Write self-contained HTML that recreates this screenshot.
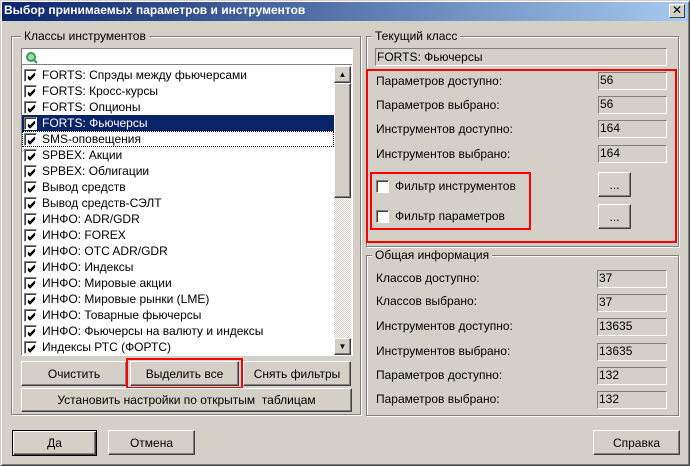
<!DOCTYPE html>
<html><head><meta charset="utf-8"><style>
*{box-sizing:border-box;margin:0;padding:0}
body{width:690px;height:466px;background:#d4d0c8;font-family:"Liberation Sans","DejaVu Sans",sans-serif;font-size:12px;color:#000;position:relative;overflow:hidden}
.a{position:absolute}
.title{left:0;top:0;width:690px;height:21px;background:linear-gradient(90deg,#0a246a,#a6caf0);color:#fff;font-weight:bold;font-size:12px;line-height:21px;padding-left:4px}
.close{left:669px;top:4px;width:16px;height:14px;background:#d4d0c8;border:1px solid;border-color:#fff #404040 #404040 #fff;font-size:12px;line-height:11px;text-align:center;font-weight:bold;color:#000}
.grp{border:1px solid #808080;box-shadow:1px 1px 0 #fff, inset 1px 1px 0 #fff}
.gt{background:#d4d0c8;padding:0 3px;line-height:14px}
.btn{background:#d4d0c8;border:1px solid;border-color:#fff #404040 #404040 #fff;box-shadow:inset -1px -1px 0 #808080;text-align:center;display:flex;align-items:center;justify-content:center}
.sunk{border:1px solid;border-color:#808080 #fff #fff #808080}
.val{background:#d4d0c8;border:1px solid;border-color:#808080 #fff #fff #808080;padding-left:1px;line-height:15px}
.row{position:absolute;left:0;width:312px;height:16px;line-height:16px;padding-left:20px;white-space:nowrap}
.cb{position:absolute;left:2px;top:2px;width:13px;height:13px;background:#fff;border:1px solid;border-color:#808080 #fff #fff #808080;box-shadow:inset 1px 1px 0 #404040}
.cb svg{position:absolute;left:2px;top:2px}
.sel{background:#0a246a;color:#fff}
.red{border:2px solid #f00}
</style></head><body>
<div class="a title">Выбор принимаемых параметров и инструментов</div>
<div class="a close">✕</div>

<!-- left group -->
<div class="a grp" style="left:11px;top:36px;width:350px;height:379px"></div>
<div class="a gt" style="left:21px;top:29px">Классы инструментов</div>
<div class="a sunk" style="left:21px;top:48px;width:332px;height:308px;background:#fff"></div>
<div class="a" style="left:22px;top:49px;width:330px;height:16px;border-bottom:1px solid #808080">
<svg width="14" height="14" style="position:absolute;left:3px;top:2px"><circle cx="6" cy="6" r="4" fill="#9fe0a0" stroke="#3a9a5a" stroke-width="2"/><line x1="9" y1="9" x2="12" y2="12" stroke="#3a9a5a" stroke-width="2"/></svg></div>
<div class="a" style="left:22px;top:67px;width:312px;height:288px;overflow:hidden">
<div id="rows"></div>
</div>
<!-- scrollbar -->
<div class="a" style="left:334px;top:66px;width:17px;height:289px;background:repeating-conic-gradient(#fff 0 25%,#d4d0c8 0 50%) 0 0/2px 2px"></div>
<div class="a btn" style="left:334px;top:66px;width:17px;height:17px;font-size:8px">▲</div>
<div class="a btn" style="left:334px;top:83px;width:17px;height:115px"></div>
<div class="a btn" style="left:334px;top:338px;width:17px;height:17px;font-size:8px">▼</div>

<div class="a btn" style="left:21px;top:361px;width:106px;height:25px">Очистить</div>
<div class="a btn" style="left:130px;top:361px;width:109px;height:25px">Выделить все</div>
<div class="a red" style="left:126px;top:358px;width:117px;height:31px"></div>
<div class="a btn" style="left:243px;top:361px;width:108px;height:25px">Снять фильтры</div>
<div class="a btn" style="left:21px;top:388px;width:331px;height:24px">Установить настройки по открытым&nbsp; таблицам</div>

<div class="a btn" style="left:12px;top:430px;width:85px;height:26px;border-color:#000;box-shadow:inset 1px 1px 0 #fff,inset -1px -1px 0 #404040,inset -2px -2px 0 #808080">Да</div>
<div class="a btn" style="left:108px;top:430px;width:87px;height:25px">Отмена</div>
<div class="a btn" style="left:593px;top:430px;width:87px;height:25px">Справка</div>

<!-- right group 1 -->
<div class="a grp" style="left:366px;top:36px;width:313px;height:211px"></div>
<div class="a gt" style="left:372px;top:29px">Текущий класс</div>
<div class="a val" style="left:375px;top:48px;width:292px;height:18px;line-height:16px">FORTS: Фьючерсы</div>
<div class="a red" style="left:366px;top:69px;width:311px;height:174px"></div>
<div class="a" style="left:376px;top:74px">Параметров доступно:</div>
<div class="a" style="left:376px;top:98px">Параметров выбрано:</div>
<div class="a" style="left:376px;top:122px">Инструментов доступно:</div>
<div class="a" style="left:376px;top:147px">Инструментов выбрано:</div>
<div class="a val" style="left:598px;top:72px;width:69px;height:18px">56</div>
<div class="a val" style="left:598px;top:96px;width:69px;height:18px">56</div>
<div class="a val" style="left:598px;top:120px;width:69px;height:18px">164</div>
<div class="a val" style="left:598px;top:145px;width:69px;height:18px">164</div>
<div class="a red" style="left:370px;top:172px;width:161px;height:58px"></div>
<div class="a cb" style="left:376px;top:180px"></div>
<div class="a" style="left:395px;top:179px">Фильтр инструментов</div>
<div class="a cb" style="left:376px;top:210px"></div>
<div class="a" style="left:395px;top:209px">Фильтр параметров</div>
<div class="a btn" style="left:598px;top:172px;width:33px;height:25px">...</div>
<div class="a btn" style="left:598px;top:204px;width:33px;height:25px">...</div>

<!-- right group 2 -->
<div class="a grp" style="left:366px;top:255px;width:313px;height:161px"></div>
<div class="a gt" style="left:372px;top:248px">Общая информация</div>
<div class="a" style="left:376px;top:271px">Классов доступно:</div>
<div class="a" style="left:376px;top:294px">Классов выбрано:</div>
<div class="a" style="left:376px;top:319px">Инструментов доступно:</div>
<div class="a" style="left:376px;top:344px">Инструментов выбрано:</div>
<div class="a" style="left:376px;top:368px">Параметров доступно:</div>
<div class="a" style="left:376px;top:392px">Параметров выбрано:</div>
<div class="a val" style="left:597px;top:270px;width:70px;height:18px">37</div>
<div class="a val" style="left:597px;top:294px;width:70px;height:18px">37</div>
<div class="a val" style="left:597px;top:318px;width:70px;height:18px">13635</div>
<div class="a val" style="left:597px;top:343px;width:70px;height:18px">13635</div>
<div class="a val" style="left:597px;top:367px;width:70px;height:18px">132</div>
<div class="a val" style="left:597px;top:391px;width:70px;height:18px">132</div>

<div class="a" style="left:0;top:0;width:690px;height:466px;border:1px solid;border-color:#d4d0c8 #404040 #404040 #d4d0c8;box-shadow:inset 1px 1px 0 #fff,inset -1px -1px 0 #808080;pointer-events:none"></div>
<script>
var items=["FORTS: Спрэды между фьючерсами","FORTS: Кросс-курсы","FORTS: Опционы","FORTS: Фьючерсы","SMS-оповещения","SPBEX: Акции","SPBEX: Облигации","Вывод средств","Вывод средств-СЭЛТ","ИНФО: ADR/GDR","ИНФО: FOREX","ИНФО: OTC ADR/GDR","ИНФО: Индексы","ИНФО: Мировые акции","ИНФО: Мировые рынки (LME)","ИНФО: Товарные фьючерсы","ИНФО: Фьючерсы на валюту и индексы","Индексы РТС (ФОРТС)"];
var h="";items.forEach(function(t,i){h+='<div class="row'+(i==3?' sel':'')+'" style="top:'+(i*16)+'px'+(i==4?';outline:1px dotted #000;outline-offset:-1px':'')+'"><span class="cb"><svg width="9" height="9"><path d="M1 4 L3 6 L8 1 M1 5 L3 7 L8 2 M1 6 L3 8 L8 3" stroke="#000" fill="none" stroke-width="1"/></svg></span>'+t+'</div>';});
document.getElementById("rows").innerHTML=h;
</script>
</body></html>
